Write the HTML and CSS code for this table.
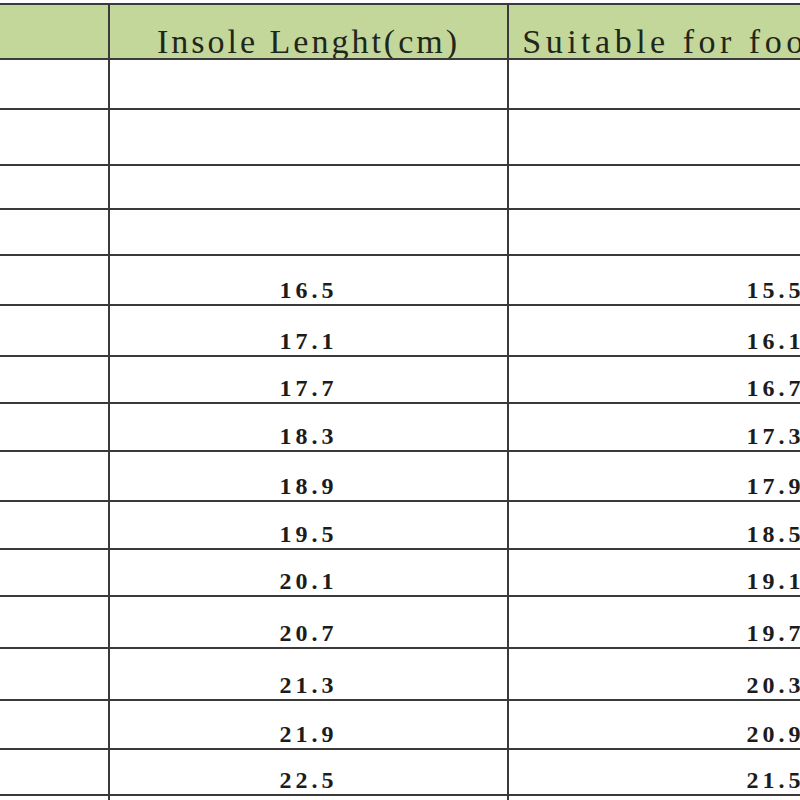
FILE: index.html
```html
<!DOCTYPE html>
<html lang="en">
<head>
<meta charset="utf-8">
<title>Insole size chart</title>
<link rel="stylesheet" href="styles.css">
</head>
<body>
<table class="chart">
  <colgroup>
    <col class="c-first">
    <col class="c-insole">
    <col class="c-foot">
  </colgroup>
  <thead>
    <tr class="h55 head">
      <th></th>
      <th>Insole Lenght(cm)</th>
      <th class="wide">Suitable for foot length(cm)</th>
    </tr>
  </thead>
  <tbody>
    <tr class="h50"><td></td><td></td><td></td></tr>
    <tr class="h56"><td></td><td></td><td></td></tr>
    <tr class="h44"><td></td><td></td><td></td></tr>
    <tr class="h46"><td></td><td></td><td></td></tr>
    <tr class="h50"><td></td><td>16.5</td><td>15.5</td></tr>
    <tr class="h51"><td></td><td>17.1</td><td>16.1</td></tr>
    <tr class="h47"><td></td><td>17.7</td><td>16.7</td></tr>
    <tr class="h48"><td></td><td>18.3</td><td>17.3</td></tr>
    <tr class="h50"><td></td><td>18.9</td><td>17.9</td></tr>
    <tr class="h48"><td></td><td>19.5</td><td>18.5</td></tr>
    <tr class="h47"><td></td><td>20.1</td><td>19.1</td></tr>
    <tr class="h52"><td></td><td>20.7</td><td>19.7</td></tr>
    <tr class="h52"><td></td><td>21.3</td><td>20.3</td></tr>
    <tr class="h49"><td></td><td>21.9</td><td>20.9</td></tr>
    <tr class="h46"><td></td><td>22.5</td><td>21.5</td></tr>
    <tr class="h50"><td></td><td>23.1</td><td>22.1</td></tr>
  </tbody>
</table>
</body>
</html>
```
FILE: styles.css
```css
html, body {
  margin: 0;
  padding: 0;
  background: #ffffff;
  overflow: hidden;
  height: 800px;
}

.chart {
  border-collapse: collapse;
  table-layout: fixed;
  width: 1043px;
  margin-top: 3px;
  color: #1c1c1c;
  font-family: "Liberation Serif", "Times New Roman", serif;
}

.c-first { width: 109px; }
.c-insole { width: 399px; }
.c-foot { width: 535px; }

.chart th,
.chart td {
  border: 2px solid #3a3a3a;
  padding: 0;
  text-align: center;
  vertical-align: bottom;
  white-space: nowrap;
  overflow: hidden;
}

.chart th:first-child,
.chart td:first-child {
  border-left: none;
}

.head th {
  background: #c4d79b;
  font-weight: normal;
  font-size: 34px;
  line-height: 0.85;
  letter-spacing: 3px;
  color: #1f261c;
  padding-bottom: 1px;
}

.head th.wide {
  letter-spacing: 4.5px;
}

.chart td {
  font-weight: bold;
  font-size: 24px;
  line-height: 1;
  letter-spacing: 4px;
  padding-bottom: 2px;
}

.h44 { height: 44px; }
.h46 { height: 46px; }
.h47 { height: 47px; }
.h48 { height: 48px; }
.h49 { height: 49px; }
.h50 { height: 50px; }
.h51 { height: 51px; }
.h52 { height: 52px; }
.h55 { height: 55px; }
.h56 { height: 56px; }
```
